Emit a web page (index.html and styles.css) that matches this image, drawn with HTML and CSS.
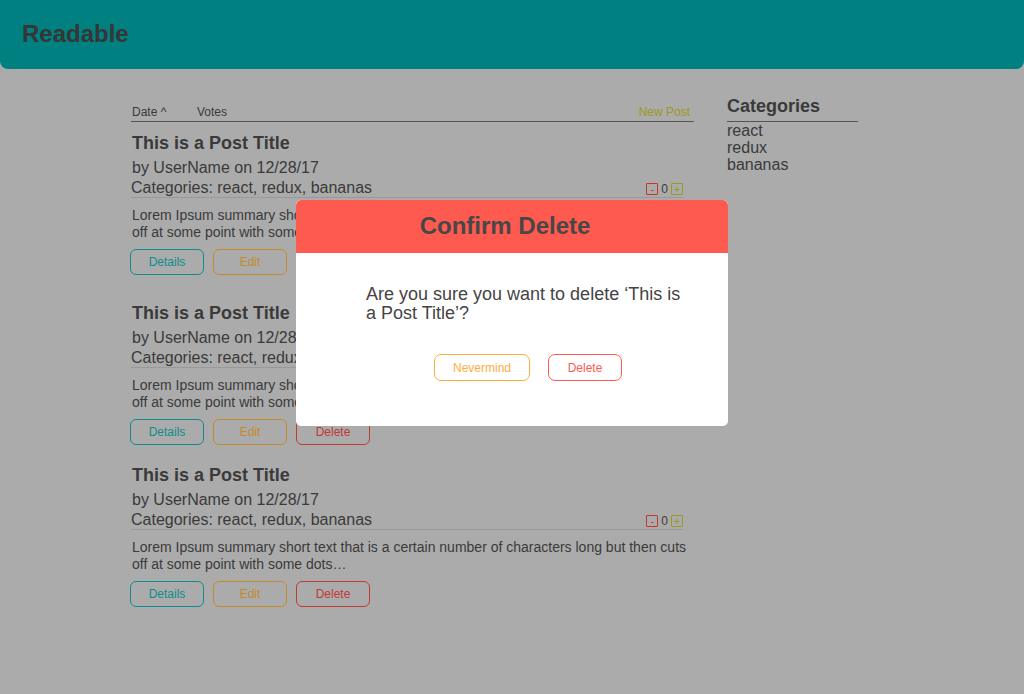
FILE: index.html
```html
<!DOCTYPE html>
<html>
<head>
<meta charset="utf-8">
<link rel="stylesheet" href="styles.css">
</head>
<body>
<header class="topbar"><h1 class="brand">Readable</h1></header>
<div class="layout">
  <main class="posts">
    <div class="sortbar">
      <span class="sort-date">Date ^</span>
      <span class="sort-votes">Votes</span>
      <span class="new-post">New Post</span>
    </div>

    <article class="post post-first">
      <h2 class="post-title">This is a Post Title</h2>
      <div class="byline">by UserName on 12/28/17</div>
      <div class="catrow">
        <span>Categories: react, redux, bananas</span>
        <span class="votes"><span class="vbtn minus">-</span><span class="vcount">0</span><span class="vbtn plus">+</span></span>
      </div>
      <p class="summary">Lorem Ipsum summary short text that is a certain number of characters long but then cuts off at some point with some dots…</p>
      <div class="actions"><button class="btn details">Details</button><button class="btn edit">Edit</button><button class="btn delete">Delete</button></div>
    </article>

    <article class="post">
      <h2 class="post-title">This is a Post Title</h2>
      <div class="byline">by UserName on 12/28/17</div>
      <div class="catrow">
        <span>Categories: react, redux, bananas</span>
        <span class="votes"><span class="vbtn minus">-</span><span class="vcount">0</span><span class="vbtn plus">+</span></span>
      </div>
      <p class="summary">Lorem Ipsum summary short text that is a certain number of characters long but then cuts off at some point with some dots…</p>
      <div class="actions"><button class="btn details">Details</button><button class="btn edit">Edit</button><button class="btn delete">Delete</button></div>
    </article>

    <article class="post">
      <h2 class="post-title">This is a Post Title</h2>
      <div class="byline">by UserName on 12/28/17</div>
      <div class="catrow">
        <span>Categories: react, redux, bananas</span>
        <span class="votes"><span class="vbtn minus">-</span><span class="vcount">0</span><span class="vbtn plus">+</span></span>
      </div>
      <p class="summary">Lorem Ipsum summary short text that is a certain number of characters long but then cuts off at some point with some dots…</p>
      <div class="actions"><button class="btn details">Details</button><button class="btn edit">Edit</button><button class="btn delete">Delete</button></div>
    </article>
  </main>

  <aside class="sidebar">
    <h3 class="side-title">Categories</h3>
    <ul class="cat-list">
      <li>react</li>
      <li>redux</li>
      <li>bananas</li>
    </ul>
  </aside>
</div>

<div class="modal">
  <div class="modal-head">Confirm Delete</div>
  <div class="modal-body">
    <p class="modal-text">Are you sure you want to delete ‘This is a Post Title’?</p>
    <div class="modal-actions">
      <button class="mbtn never">Nevermind</button>
      <button class="mbtn mdelete">Delete</button>
    </div>
  </div>
</div>
</body>
</html>
```

FILE: styles.css
```css
html, body {
  margin: 0;
  padding: 0;
}
body {
  background: #ababab;
  font-family: "Liberation Sans", Arial, sans-serif;
  color: #3a3a3a;
  width: 1024px;
  height: 694px;
  position: relative;
  overflow: hidden;
}
.topbar {
  height: 69px;
  background: #008080;
  border-radius: 0 0 8px 8px;
  display: flex;
  align-items: center;
}
.brand {
  margin: 0 0 2px 22px;
  font-size: 24px;
  font-weight: bold;
  color: #363636;
}
.layout {
  display: flex;
  gap: 33px;
  padding-left: 131px;
}
.posts {
  width: 563px;
}
.sortbar {
  display: flex;
  margin-top: 36px;
  font-size: 12px;
  line-height: 14px;
  padding: 0 4px 2px 1px;
  border-bottom: 1px solid #555;
}
.sort-date { width: 65px; }
.new-post { margin-left: auto; color: #9a9a22; }
.post {
  margin-top: 10px;
  margin-bottom: 19px;
}
.post-first {
  margin-bottom: 27px;
}
.post-title {
  margin: 0 0 0 1px;
  font-size: 18px;
  line-height: 22px;
  font-weight: bold;
  color: #3a3a3a;
}
.post + .post { margin-top: 0; }
.byline {
  margin: 5px 0 0 1px;
  font-size: 16px;
  line-height: 18px;
}
.catrow {
  width: 552px;
  display: flex;
  justify-content: space-between;
  align-items: center;
  font-size: 16px;
  line-height: 18px;
  height: 18px;
  margin-top: 2px;
  border-bottom: 1px solid #999;
}
.votes {
  display: flex;
  align-items: center;
  gap: 3px;
  font-size: 12px;
  margin-top: 2px;
}
.vbtn {
  width: 10px;
  height: 10px;
  border: 1px solid;
  border-radius: 1px;
  display: flex;
  align-items: center;
  justify-content: center;
  font-size: 11px;
  line-height: 10px;
}
.minus { border-color: #c23530; color: #c23530; }
.plus { border-color: #9a9a22; color: #9a9a22; }
.vcount { color: #3a3a3a; }
.summary {
  margin: 9px 0 0 1px;
  font-size: 14px;
  line-height: 17px;
}
.actions {
  display: flex;
  gap: 9px;
  margin-top: 8px;
  margin-left: -1px;
}
.btn {
  width: 74px;
  height: 26px;
  border: 1px solid;
  border-radius: 6px;
  background: transparent;
  font-family: "Liberation Sans", Arial, sans-serif;
  font-size: 12px;
  padding: 0;
}
.details { border-color: #0f8d8d; color: #0f8d8d; }
.edit { border-color: #c48a2a; color: #c48a2a; }
.delete { border-color: #c23a34; color: #c23a34; }
.sidebar {
  width: 131px;
  padding-top: 26px;
}
.side-title {
  margin: 0;
  font-size: 18px;
  line-height: 22px;
  font-weight: bold;
  padding-bottom: 4px;
  border-bottom: 1px solid #555;
}
.cat-list {
  list-style: none;
  margin: 0;
  padding: 0;
  font-size: 16px;
  line-height: 17px;
}
.modal {
  position: absolute;
  left: 296px;
  top: 200px;
  width: 432px;
  height: 226px;
  background: #fff;
  border-radius: 5px;
  overflow: hidden;
}
.modal-head {
  height: 52px;
  padding-bottom: 1px;
  background: #ff5a4f;
  display: flex;
  align-items: center;
  justify-content: center;
  font-size: 24px;
  font-weight: bold;
  color: #474747;
  padding-right: 14px;
  border-radius: 5px 5px 0 0;
}
.modal-body {
  padding: 32px 40px 0 70px;
}
.modal-text {
  margin: 0;
  font-size: 18px;
  line-height: 19px;
  color: #444;
  width: 322px;
}
.modal-actions {
  display: flex;
  gap: 18px;
  margin: 31px 0 0 68px;
}
.mbtn {
  height: 27px;
  border: 1px solid;
  border-radius: 7px;
  background: #fff;
  font-family: "Liberation Sans", Arial, sans-serif;
  font-size: 12px;
  padding: 0;
}
.never { width: 96px; border-color: #ffad3c; color: #ffad3c; }
.mdelete { width: 74px; border-color: #ff5a4f; color: #ff5a4f; }
```
